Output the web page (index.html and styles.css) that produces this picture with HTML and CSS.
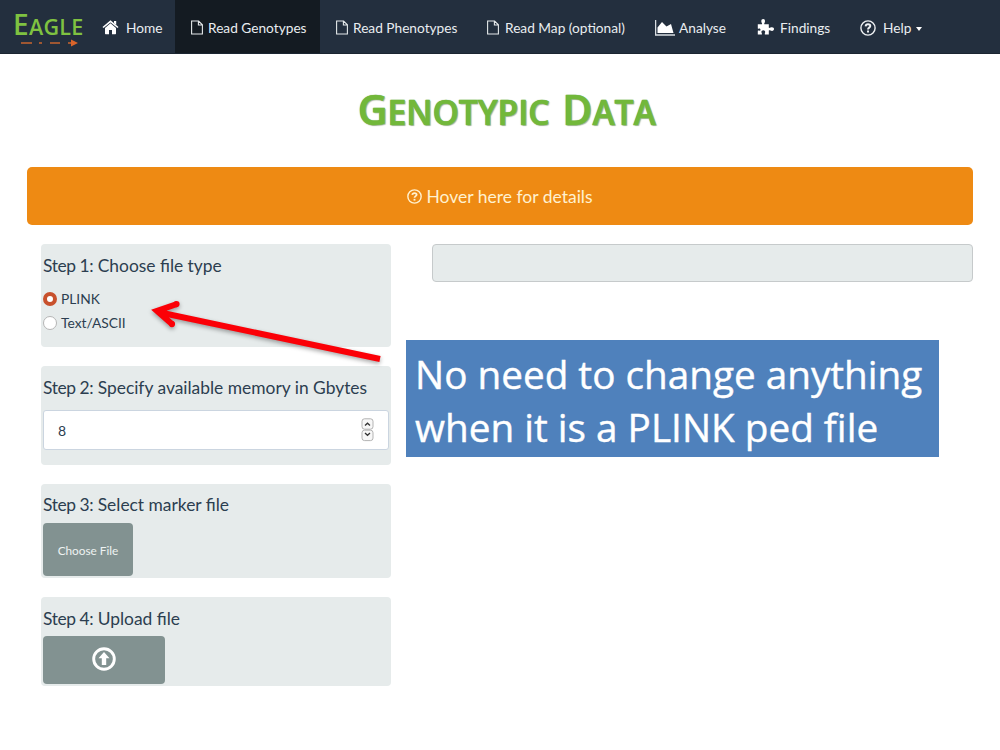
FILE: index.html
```html
<!DOCTYPE html>
<html lang="en">
<head>
<meta charset="utf-8">
<title>Eagle - Genotypic Data</title>
<link rel="stylesheet" href="styles.css">
</head>
<body>
<nav class="navbar">
  <a class="brand"><span class="brand-name"><span class="brand-cap">E</span>AGLE</span>
    <svg class="brand-line" width="60" height="8" viewBox="0 0 60 8"><path d="M1 4h11M19 4h3M30 4h10M48 4h5" stroke="#c9662f" stroke-width="1.4"/><path d="M51 .5l7 3.500-7 3.500z" fill="#d9642a"/></svg>
  </a>
  <a class="item home"><svg class="icon" width="17" height="15" viewBox="0 0 17 15"><path d="M8.500 3.300L14 8v5.600q0 .6-.6.6H10V10H7v4.200H3.600q-.6 0-.6-.6V8z" fill="#fff"/><path d="M1 7.500L8.500 1.300 16 7.500" fill="none" stroke="#fff" stroke-width="1.600"/><path d="M12 1h2.200v4L12 3.300z" fill="#fff"/></svg><span>Home</span></a>
  <a class="item page active"><svg class="icon" width="12" height="15" viewBox="0 0 12 15"><path d="M.6 1h7L11.400 4.800V14H.6zM7.400 1v4h4" fill="none" stroke="#e4e8ea" stroke-width="1.100"/></svg><span>Read Genotypes</span></a>
  <a class="item page pheno"><svg class="icon" width="12" height="15" viewBox="0 0 12 15"><path d="M.6 1h7L11.400 4.800V14H.6zM7.400 1v4h4" fill="none" stroke="#e4e8ea" stroke-width="1.100"/></svg><span>Read Phenotypes</span></a>
  <a class="item page map"><svg class="icon" width="12" height="15" viewBox="0 0 12 15"><path d="M.6 1h7L11.400 4.800V14H.6zM7.400 1v4h4" fill="none" stroke="#e4e8ea" stroke-width="1.100"/></svg><span>Read Map (optional)</span></a>
  <a class="item analyse"><svg class="icon" width="20" height="16" viewBox="0 0 20 16"><path d="M.6 0v15H20" fill="none" stroke="#d9dee2" stroke-width="1.300"/><path d="M2.500 13V7.500L7 2l4.500 4.500L16 4l2.500 9z" fill="#fff"/></svg><span>Analyse</span></a>
  <a class="item findings"><svg class="icon" width="18" height="18" viewBox="0 0 18 18"><path d="M.8 6.200H5c.4-1-.7-1.500-.7-3C4.300 1.900 5 1 6.200 1S8 1.900 8 3.200c0 1.500-1.100 2-.7 3h4.500v3.600c1 .5 1.700-.5 3.200-.5 1.300 0 2 .7 2 1.800s-.7 1.900-2 1.900c-1.500 0-2.200-1-3.200-.5V16.500H7.900c-.5-1 .3-1.400.3-2.500s-.8-1.800-1.900-1.800-1.900.7-1.900 1.800.9 1.500.4 2.500H.8v-3.700c.9-.5 1.300.1 2 0 .9-.2.900-2.100 0-2.300-.7-.1-1.100.5-2 0z" fill="#fff"/></svg><span>Findings</span></a>
  <a class="item help"><svg class="icon" width="16" height="16" viewBox="0 0 16 16"><circle cx="8" cy="8" r="7.100" fill="none" stroke="#eef1f3" stroke-width="1.400"/><path d="M5.600 6.300C5.800 4.800 6.800 4.300 8 4.300c1.400 0 2.300.8 2.300 1.800C10.300 7.600 8 7.700 8 9.400" fill="none" stroke="#eef1f3" stroke-width="1.900"/><path d="M7 10.500h2v1.900H7z" fill="#eef1f3"/></svg><span>Help</span><i class="caret"></i></a>
</nav>

<h1 class="title"><span class="big">G</span>ENOTYPIC <span class="big">D</span>ATA</h1>

<div class="details"><svg class="details-icon" width="15" height="15" viewBox="0 0 16 16"><circle cx="8" cy="8" r="7.100" fill="none" stroke="#fff1cf" stroke-width="1.500"/><path d="M5.600 6.300C5.800 4.800 6.800 4.300 8 4.300c1.400 0 2.300.8 2.300 1.800C10.300 7.600 8 7.700 8 9.400" fill="none" stroke="#fff1cf" stroke-width="1.900"/><path d="M7 10.500h2v1.900H7z" fill="#fff1cf"/></svg><span>Hover here for details</span></div>

<main class="content">
  <section class="steps">
    <div class="well type">
      <h4><span class="step">Step 1:</span> Choose file type</h4>
      <label class="choice"><i class="radio checked"></i>PLINK</label>
      <label class="choice"><i class="radio"></i>Text/ASCII</label>
    </div>
    <div class="well memory">
      <h4><span class="step">Step 2:</span> Specify available memory in Gbytes</h4>
      <div class="number"><span>8</span>
        <svg width="13" height="24" viewBox="0 0 13 24"><g fill="#f7f7f7" stroke="#aaa" stroke-width=".9"><rect x="1" y=".8" width="11" height="10.400" rx="2.500"/><rect x="1" y="12.200" width="11" height="10.400" rx="2.500"/></g><path d="M4 7.500l2.500-2.300L9 7.500M4 15l2.500 2.300L9 15" fill="none" stroke="#333" stroke-width="1.300"/></svg>
      </div>
    </div>
    <div class="well marker">
      <h4><span class="step">Step 3:</span> Select marker file</h4>
      <div class="button choose">Choose File</div>
    </div>
    <div class="well upload">
      <h4><span class="step">Step 4:</span> Upload file</h4>
      <div class="button send"><svg width="24" height="24" viewBox="0 0 24 24"><circle cx="12" cy="12" r="10.300" fill="none" stroke="#fff" stroke-width="2.900"/><path d="M12 5l5.500 6.200h-3.300V18H9.800v-6.800H6.500z" fill="#fff"/></svg></div>
    </div>
  </section>
  <section class="output"></section>
</main>

<div class="callout"><div class="line one">No need to change anything</div><div class="line two">when it is a PLINK ped file</div></div>
<svg class="arrow" width="250" height="80" viewBox="0 0 250 80"><path d="M240 64L19 17.200M37 9L17 15.900 32.500 29.500" fill="none" stroke="#fb0007" stroke-width="6" stroke-linejoin="miter"/><path d="M36.500 9.100h.01M32 29.100h.01" stroke="#fb0007" stroke-width="6.200" stroke-linecap="round"/></svg>
</body>
</html>
```
FILE: styles.css
```css
* { box-sizing: border-box; }
body {
  margin: 0;
  width: 1000px;
  height: 750px;
  overflow: hidden;
  position: relative;
  background: #fff;
  color: #2c3e50;
  font-family: Lato, sans-serif;
  font-size: 14px;
}
.navbar {
  display: flex;
  height: 54px;
  background: #232f3e;
  border-bottom: 1px solid #1b2531;
  color: #e9edf0;
  font-size: 13.700px;
}
.brand { width: 87px; padding: 9px 0 0 13px; }
.brand-name {
  display: block;
  height: 30px;
  font: 600 21.500px/31px "Open Sans", sans-serif;
  letter-spacing: .3px;
  color: #7fc241;
  white-space: nowrap;
}
.brand-cap { font-size: 28px; }
.brand-line { display: block; margin-left: 7px; }
.item {
  display: flex;
  align-items: center;
  padding: 2px 0 0 16px;
  white-space: nowrap;
  height: 53px;
}
.item .icon { flex: none; }
.home { width: 88px; padding-left: 15px; }
.home .icon { margin-right: 7px; }
.page .icon { margin-right: 5px; }
.active { width: 145px; background: #141b22; }
.pheno { width: 152px; }
.map { width: 168px; padding-left: 15px; }
.map .icon { margin-right: 6px; }
.analyse { width: 102px; padding-left: 15px; }
.analyse .icon { margin-right: 4px; }
.findings { width: 103px; padding-left: 15px; }
.findings .icon { margin-right: 5px; margin-top: -2px; }
.help { padding-left: 15px; }
.help .icon { margin-right: 7px; }
.caret {
  margin-left: 5px;
  margin-top: 2px;
  border: 3.500px solid transparent;
  border-top: 4px solid #fff;
  border-bottom: 0;
}
.title {
  margin: 30px 0 0 358px;
  height: 82px;
  font: 600 33.500px/50px "Open Sans", sans-serif;
  color: #72b83a;
  white-space: nowrap;
  word-spacing: 4px;
  -webkit-text-stroke: .6px #72b83a;
  text-shadow: 1px 1px 1px #a9b59f, -.5px 0 1px #5f9636;
}
.big { font-size: 41px; }
.details {
  display: flex;
  justify-content: center;
  align-items: center;
  gap: 4px;
  margin: 1px 27px 0;
  height: 58px;
  border-radius: 5px;
  background: #ee8a13;
  color: #fff1cf;
  font-size: 17.500px;
}
.content {
  display: flex;
  align-items: flex-start;
  gap: 41px;
  padding: 19px 27px 0 41px;
}
.steps { width: 350px; }
.well {
  background: #e6ebeb;
  border-radius: 4px;
  margin-bottom: 19px;
  padding: 12px 2px 0;
}
.type { height: 103px; }
.memory { height: 99px; }
.marker { height: 94px; padding-top: 11px; }
.upload { height: 89px; }
h4 {
  margin: 0;
  font-size: 17.400px;
  font-weight: 400;
  line-height: 20px;
  white-space: nowrap;
}
.step { letter-spacing: -.4px; }
.choice { display: flex; align-items: center; height: 24px; gap: 4px; font-size: 13.800px; }
.type h4 { margin-bottom: 10px; }
.radio {
  width: 14px;
  height: 14px;
  border-radius: 50%;
  border: 1px solid #b5b5b5;
  background: #fff;
  margin-top: 1px;
}
.checked { border: 4px solid #c8512d; }
.number {
  display: flex;
  justify-content: space-between;
  align-items: center;
  height: 40px;
  margin-top: 12px;
  padding: 0 14px 0 14px;
  border: 1px solid #cbd5e0;
  border-radius: 3px;
  background: #fff;
}
.button {
  display: flex;
  align-items: center;
  justify-content: center;
  background: #829291;
  color: #eef2f2;
  border-radius: 4px;
}
.choose { width: 90px; height: 53px; margin-top: 8px; font-size: 11.800px; padding-top: 2px; }
.send { width: 122px; height: 48px; margin-top: 7px; padding-bottom: 3px; }
.output {
  flex: 1;
  height: 38px;
  border: 1px solid #c6cacb;
  border-radius: 4px;
  background: #e6ebeb;
}
.callout {
  position: absolute;
  left: 406px;
  top: 340px;
  width: 533px;
  height: 117px;
  padding: 8px 0 0 9px;
  background: #4f81bc;
  color: #fff;
  font: 400 38.700px/53px "Open Sans", sans-serif;
  -webkit-text-stroke: .4px #fff;
  white-space: nowrap;
}
.arrow {
  position: absolute;
  left: 140px;
  top: 295px;
  filter: drop-shadow(0 2px 2px rgba(0, 0, 0, .35));
}
```
